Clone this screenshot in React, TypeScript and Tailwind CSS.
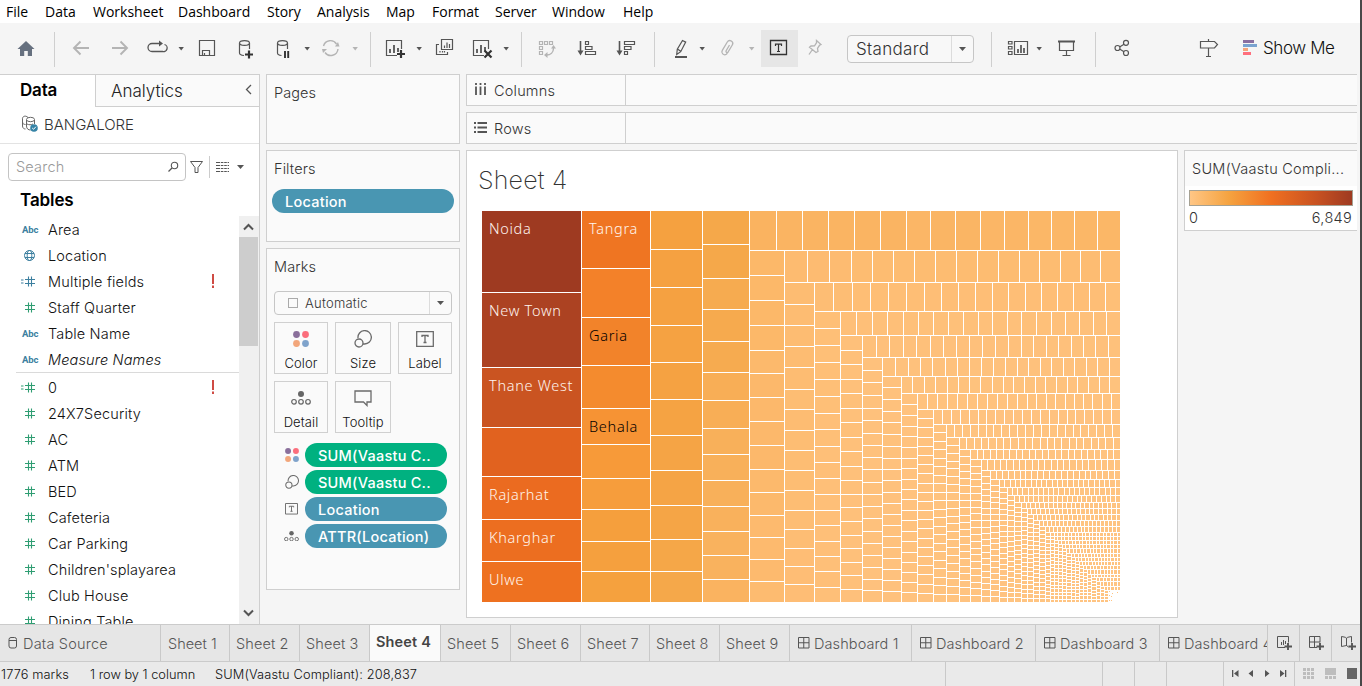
import React from "react";

const UI = "font-['Inter','Liberation_Sans',sans-serif] font-light";
const INK = "#555";
const DIM = "#b4b4b4";

/* ---------- toolbar ---------- */

function Tool({ x, w, className = "", children }: { x: number; w: number; className?: string; children?: React.ReactNode }) {
  return (
    <svg width={w} height={51} viewBox={`${x} 23 ${w} 51`} fill="none" stroke={INK} strokeWidth={1.2} className={`block shrink-0 ${className}`}>
      {children}
    </svg>
  );
}
const Caret = ({ x, c = INK, y = 47 }: { x: number; c?: string; y?: number }) => <path d={`M${x} ${y}h5.4l-2.7 3.6z`} fill={c} stroke="none" />;
const Sep = ({ x }: { x: number }) => <path d={`M${x + 0.5} 32v35`} stroke="#cfcfcf" strokeWidth={1} />;

function Toolbar() {
  return (
    <div className="flex h-[51px] shrink-0 bg-[#f5f5f5]">
      <Tool x={0} w={60}>
        <path d="M26 41l-8.5 8H20v7h4.2v-5h3.6v5H32v-7h2.500z" fill="#66707f" stroke="none" />
        <Sep x={54} />
      </Tool>
      <Tool x={60} w={40}><path d="M89 48H74M80.500 41.500L74 48l6.500 6.500" stroke={DIM} strokeWidth={1.9} /></Tool>
      <Tool x={100} w={40}><path d="M112 48h15M120.500 41.500L127 48l-6.500 6.500" stroke={DIM} strokeWidth={1.9} /></Tool>
      <Tool x={140} w={50}>
        <path d="M160 43.500h-8a4 4 0 000 8h10.500a3.600 3.600 0 002-7" strokeWidth={1.3} />
        <path d="M159 40.500l4 3-4 3z" fill={INK} stroke="none" />
        <Caret x={178.500} />
      </Tool>
      <Tool x={190} w={37}><path d="M199.500 40.500h15v15h-15zM202.500 55v-4.500h7V55M204.500 55v-2" /></Tool>
      <Tool x={227} w={38}>
        <path d="M239.500 43v10c0 1.500 2 2.300 4.500 2.500M249.500 43v6" /><ellipse cx="244.500" cy="43" rx="5" ry="2.400" />
        <path d="M249 50.500v8M245 54.500h8" stroke="#333" strokeWidth={2.200} />
      </Tool>
      <Tool x={265} w={50}>
        <path d="M277.500 43v10c0 1.500 2 2.300 4 2.500M287.500 43v6" /><ellipse cx="282.500" cy="43" rx="5" ry="2.400" />
        <path d="M285 51v7M288.200 51v7" stroke="#333" strokeWidth={1.900} />
        <Caret x={304.500} />
      </Tool>
      <Tool x={315} w={50}>
        <path d="M323.500 46a7.200 7.200 0 0113-2M338 49a7.200 7.200 0 01-13 3.500" stroke={DIM} strokeWidth={1.400} />
        <path d="M335 46.500h4.500l-1.500-4.500zM322 49h5l-4 4z" fill={DIM} stroke="none" />
        <Caret x={352.500} c={DIM} />
      </Tool>
      <Tool x={365} w={13}><Sep x={370} /></Tool>
      <Tool x={378} w={50}>
        <path d="M397 55.500h-10.500v-15h15V49" /><path d="M390 53v-4M394 53v-8M398 52v-4" strokeWidth={1.800} />
        <path d="M401 50v8M397 54h8" stroke="#333" strokeWidth={2.200} />
        <Caret x={416.500} />
      </Tool>
      <Tool x={428} w={37}>
        <path d="M441.500 39.500h11v10h-11zM439 44.500h-2.500v10h11V52" /><path d="M444.500 48v-2.500M447 48v-5.500M449.500 48v-4M440 52.500V51M442.500 52.500V51M444.500 52.500V51" />
      </Tool>
      <Tool x={465} w={50}>
        <path d="M484 55.500h-10.500v-15h15V49" /><path d="M477 53v-4M481 53v-8M485 51v-4" strokeWidth={1.800} />
        <path d="M484.500 50.500l7 7M491.500 50.500l-7 7" stroke="#333" strokeWidth={2.200} />
        <Caret x={503.500} />
      </Tool>
      <Tool x={515} w={15}><Sep x={521} /></Tool>
      <Tool x={530} w={38}>
        <path d="M539.500 41.500h3v3h-3zM544.500 41.500h3v3h-3zM549.500 41.500h3v3h-3zM539.500 46.500h3v3h-3zM539.500 51.500h3v3h-3z" stroke={DIM} />
        <path d="M546.500 55c4 0 7-2.500 7-7" stroke={DIM} strokeWidth={1.400} /><path d="M551 48.500l2.500-3.500 2.500 3.500zM547.500 52l-3.500 3 3.500 3z" fill={DIM} stroke="none" />
      </Tool>
      <Tool x={568} w={38}>
        <path d="M580.500 41v11" strokeWidth={1.600} /><path d="M577.500 50.500h6l-3 5z" fill={INK} stroke="none" />
        <path d="M585.500 41.500h3v3h-3zM585.500 46.500h6.500v3h-6.500zM585.500 51.500h10v3h-10z" />
      </Tool>
      <Tool x={606} w={39}>
        <path d="M619.500 41v11" strokeWidth={1.600} /><path d="M616.500 50.500h6l-3 5z" fill={INK} stroke="none" />
        <path d="M624.500 41.500h10v3h-10zM624.500 46.500h6.500v3h-6.500zM624.500 51.500h3v3h-3z" />
      </Tool>
      <Tool x={645} w={20}><Sep x={654} /></Tool>
      <Tool x={665} w={47}>
        <path d="M682.500 40.500l3.200 1.600-5 9.600-4 2.800.6-5.200zM677.500 49l3.500 2.500" /><path d="M675 57h12" strokeWidth={2} />
        <Caret x={699.500} />
      </Tool>
      <Tool x={712} w={49}>
        <path d="M729.500 45l-3.500 6a1.200 1.200 0 002 1.200l4.300-7.200a2.900 2.900 0 00-5-3l-5 8.300a2.900 2.900 0 004 4l1-1" stroke={DIM} strokeWidth={1.300} />
        <Caret x={749} c={DIM} />
      </Tool>
      <Tool x={761} w={37}>
        <path d="M761 30h37v37h-37z" fill="#e6e6e6" stroke="none" />
        <path d="M770.500 40.500h16v14h-16z" stroke="#333" strokeWidth={1.300} />
        <path d="M775.500 46v-1.800h6V46M778.500 44v7.500M777 51.500h3" stroke="#333" strokeWidth={1.200} />
      </Tool>
      <Tool x={798} w={49}><path d="M816.500 40.500l4.500 4-1.500.8-2 3.200.5 3-2 1-6.500-5.200 1.500-1.300 3.500-.2 2-3zM812.500 49.500l-3.500 5" stroke={DIM} strokeWidth={1.300} /></Tool>
      <div className={`${UI} mt-3 flex h-7 w-[127px] shrink-0 items-center rounded-sm border border-[#c6c6c6] bg-[#f8f8f8] text-[17px] text-[#333]`}>
        <span className="w-[103px] pl-2 pt-[2px] tracking-[0.3px]">Standard</span>
        <span className="flex h-full flex-1 items-center justify-center border-l border-[#dcdcdc]"><svg width="7" height="4"><path d="M0 0h7L3.500 4z" fill={INK} /></svg></span>
      </div>
      <Tool x={974} w={26}><Sep x={991} /></Tool>
      <Tool x={1000} w={48}>
        <path d="M1014.500 41.500h13v13h-13zM1008.500 41.500h3.500v2.500h-3.500zM1008.500 46.500h3.500v2.500h-3.500zM1008.500 51.500h3.500v3h-3.500z" />
        <path d="M1018 53v-4M1021 53v-8M1024 53v-5" strokeWidth={1.700} />
        <Caret x={1036.500} />
      </Tool>
      <Tool x={1048} w={37}><path d="M1058 41.500h17" strokeWidth={2} /><path d="M1059.500 42v8.500h14V42M1066.500 50.500V55M1062.500 55.500h8" /></Tool>
      <Tool x={1085} w={20}><Sep x={1095} /></Tool>
      <Tool x={1105} w={45}><circle cx="1117.500" cy="48" r="2.500" /><circle cx="1126" cy="42.800" r="2.500" /><circle cx="1126" cy="53" r="2.500" /><path d="M1120 46.700l4-2.500M1120 49.300l4 2.500" /></Tool>
      <Tool x={1190} w={40} className="ml-10"><path d="M1200.500 41.500h14l3 3-3 3.500h-14zM1208.500 39v2.500M1208.500 48v8M1206 56.500h5" /></Tool>
      <div className="ml-3 flex items-center">
        <svg width="15" height="16" viewBox="0 0 15 16" className="mb-[2px]">
          <path d="M1 0h11v3H1z" fill="#8a6fa0" /><path d="M1 4h14v3H1z" fill="#7aa3d0" /><path d="M1 8h5v3H1z" fill="#f4a57a" /><path d="M1 12h8v3H1z" fill="#ff6f7d" />
        </svg>
        <span className={`${UI} ml-[6px] text-[17px] tracking-[-0.4px] text-[#111]`}>Show Me</span>
      </div>
    </div>
  );
}

/* ---------- data pane ---------- */

type Kind = "abc" | "geo" | "calcDim" | "num" | "calcNum";

function FieldIcon({ kind }: { kind: Kind }) {
  const blue = "#3c7f9f", green = "#2f9d72";
  if (kind === "abc") return <span className="w-7 pl-[2px] pt-[2px] font-['Roboto',sans-serif] text-[9.500px] font-bold tracking-[-0.1px] text-[#3c7f9f]">Abc</span>;
  if (kind === "geo")
    return (
      <svg width="28" height="14" viewBox="0 0 28 14" fill="none" stroke={blue} strokeWidth="1">
        <circle cx="9.500" cy="7.500" r="5" /><ellipse cx="9.500" cy="7.500" rx="2.300" ry="5" /><path d="M5 5.500h9M5 9.500h9" />
      </svg>
    );
  const calc = kind !== "num";
  return (
    <svg width="28" height="14" viewBox="0 0 28 14" fill="none" stroke={kind === "calcDim" ? blue : green} strokeWidth="1.100">
      <path d="M5 5.500h10M5 9.500h10M8.500 2.500v10M11.500 2.500v10" />
      {calc && <path d="M1 6h2.500M1 9h2.500" />}
    </svg>
  );
}

const dims: [Kind, string, boolean?][] = [
  ["abc", "Area"], ["geo", "Location"], ["calcDim", "Multiple fields", true], ["num", "Staff Quarter"], ["abc", "Table Name"], ["abc", "Measure Names"],
];
const measures: [Kind, string, boolean?][] = [
  ["calcNum", "0", true], ["num", "24X7Security"], ["num", "AC"], ["num", "ATM"], ["num", "BED"], ["num", "Cafeteria"], ["num", "Car Parking"],
  ["num", "Children'splayarea"], ["num", "Club House"], ["num", "Dining Table"],
];

function Field({ f }: { f: [Kind, string, boolean?] }) {
  return (
    <div className="flex h-[26px] items-center pl-5">
      <FieldIcon kind={f[0]} />
      <span className={`flex-1 pt-[2px] text-[14.500px] tracking-[0.15px] text-[#111] ${f[1] === "Measure Names" ? "italic" : ""}`}>{f[1]}</span>
      {f[2] && <svg width="28" height="14"><path d="M2 0v10M2 11.500v2.500" stroke="#cf4b44" strokeWidth="2" /></svg>}
    </div>
  );
}

function DataPane() {
  return (
    <div className={`${UI} flex w-[260px] shrink-0 flex-col border-r border-t border-[#cfcfcf] bg-white`}>
      <div className="flex h-8 shrink-0">
        <div className="w-[95px] pl-5 pt-[3px] text-[17px] font-semibold leading-6 tracking-[-0.2px] text-black">Data</div>
        <div className="flex flex-1 justify-between border-b border-l border-[#cfcfcf] bg-[#fafafa] pl-[15px] pr-[7px] pt-1 text-[17px] leading-6 text-[#222]">
          Analytics
          <svg width="7" height="12" className="mt-[5px]"><path d="M6 1L1.500 5.500 6 10" fill="none" stroke={INK} strokeWidth="1.300" /></svg>
        </div>
      </div>
      <div className="flex h-[37px] shrink-0 items-center border-b border-[#e3e3e3] pl-5 text-[15px] text-[#333]">
        <svg width="18" height="18" viewBox="0 0 18 18" fill="none" stroke="#666" className="mb-[2px]">
          <path d="M8 2.500C5-.5 2 2 2.500 4v7c0 2 1.500 3 3 3M2.500 7c0 2 2 2.500 3 2.500M6.500 5v6c0 3 2 4 4 4" /><ellipse cx="10.500" cy="4.500" rx="4" ry="2.200" /><path d="M14.500 5v4M7 9c2 1 4 1 6 0" />
          <circle cx="14" cy="13" r="3.800" fill="#3583a6" stroke="none" /><path d="M12.200 13l1.400 1.300 2.300-2.600" stroke="#fff" />
        </svg>
        <span className="ml-[6px] pt-[1px]">BANGALORE</span>
      </div>
      <div className="flex h-[45px] shrink-0 items-center pl-2">
        <div className="flex h-7 w-[178px] items-center justify-between rounded-sm border border-[#c4c4c4] pl-[7px] pr-[6px] text-[14.500px] tracking-[0.2px] text-[#999]">
          Search
          <svg width="11" height="11" fill="none" stroke="#555"><circle cx="6.500" cy="4.500" r="3.200" strokeWidth="1.100" /><path d="M4 7l-3.500 3.500" strokeWidth="1.300" /></svg>
        </div>
        <svg width="68" height="28" viewBox="186 153 68 28" fill="none" stroke="#555">
          <path d="M190.500 161.500h12l-4.500 6v5h-3v-5z" /><path d="M209.500 156v22" stroke="#ccc" />
          <path d="M216 162.500h13M216 165.500h13M216 168.500h13M216 171.500h13" strokeWidth="1.200" strokeDasharray="4 .8 2.600 .8 2.600 .8 2" />
          <path d="M237 165h7l-3.500 4z" fill={INK} stroke="none" />
        </svg>
      </div>
      <div className="flex h-[27px] shrink-0 items-start pl-5 text-[17px] font-semibold leading-[22px] tracking-[-0.1px] text-black">Tables</div>
      <div className="flex min-h-0 flex-1">
        <div className="w-[239px] overflow-hidden">
          {dims.map((f) => <Field key={f[1]} f={f} />)}
          <div className="ml-4 border-t border-[#dadada] pb-[1px]" />
          {measures.map((f) => <Field key={f[1]} f={f} />)}
        </div>
        <div className="flex flex-1 flex-col items-center bg-[#f0f0f0]">
          <svg width="20" height="21"><path d="M5 13.500L9.500 9l4.500 4.500" fill="none" stroke={INK} strokeWidth="2" /></svg>
          <div className="mr-[1px] h-[109px] w-[19px] bg-[#cdcdcd]" />
          <svg width="20" height="21" className="mt-auto"><path d="M5 7.500L9.500 12 14 7.500" fill="none" stroke={INK} strokeWidth="2" /></svg>
        </div>
      </div>
    </div>
  );
}

/* ---------- shelves and marks ---------- */

const Dots = ({ s }: { s: number }) => (
  <svg width={s} height={s} viewBox="0 0 16 16">
    <circle cx="3.500" cy="3.500" r="3.400" fill="#8a6f9b" /><circle cx="12.500" cy="3.500" r="3.400" fill="#fb6e7c" /><circle cx="3.500" cy="12.500" r="3.400" fill="#f2a67b" /><circle cx="12.500" cy="12.500" r="3.400" fill="#7fa3cb" />
  </svg>
);
const SizeIcon = ({ s }: { s: number }) => (
  <svg width={s} height={s} viewBox="0 0 18 18" fill="none" stroke="#6b6b6b" strokeWidth="1.300"><path d="M4 8a6.700 6.700 0 116.500 6H9" /><circle cx="5" cy="13" r="4" /></svg>
);
const LabelIcon = ({ w }: { w: number }) => (
  <svg width={w} height={w * 0.89} viewBox="0 0 18 16" fill="none" stroke="#6b6b6b" strokeWidth="1.300"><path d="M.7.7h16.600v14.600H.7zM6 6V4.500h6V6M9 4.500v7M7.500 11.500h3" /></svg>
);
const DetailIcon = ({ w }: { w: number }) => (
  <svg width={w} height={w * 0.7} viewBox="0 0 20 14" fill="none" stroke="#666" strokeWidth="1.200"><circle cx="10" cy="3" r="3" fill="#666" stroke="none" /><circle cx="3" cy="10.800" r="2.300" /><circle cx="10" cy="10.800" r="2.300" /><circle cx="17" cy="10.800" r="2.300" /></svg>
);
const TooltipIcon = () => (
  <svg width="18" height="17" viewBox="0 0 18 17" fill="none" stroke="#6b6b6b" strokeWidth="1.300"><path d="M1 1h16v11h-4v3.500L9.500 12H1z" /></svg>
);

function MarkButton({ icon, label, wide }: { icon: React.ReactNode; label: string; wide?: boolean }) {
  return (
    <div className={`flex h-[52px] flex-col items-center justify-between border border-[#d0d0d0] pb-[1px] pt-[7px] text-[13px] text-[#111] ${wide ? "w-14" : "w-[54px]"}`}>
      <div className="flex h-[18px] items-center">{icon}</div>
      <span className="leading-[18px]">{label}</span>
    </div>
  );
}

function Pill({ icon, label, green }: { icon: React.ReactNode; label: string; green?: boolean }) {
  return (
    <div className="flex items-center">
      <div className="flex w-[38px] justify-center pl-[11px]">{icon}</div>
      <div className={`flex h-6 w-[142px] items-center rounded-full pl-[13px] pt-[2px] text-[14.500px] font-medium tracking-[0.25px] text-white ${green ? "bg-[#00b180]" : "bg-[#4996b2]"}`}>{label}</div>
    </div>
  );
}

const card = "shrink-0 border border-[#cfcfcf] bg-[#fafafa]";

function Cards() {
  return (
    <div className={`${UI} ml-[6px] flex w-[194px] shrink-0 flex-col gap-[6px] text-[14.500px] tracking-[0.1px] text-[#333]`}>
      <div className={`${card} h-[70px] pl-[7px] pt-[7px]`}>Pages</div>
      <div className={`${card} h-[92px] px-[5px] pt-[7px]`}>
        <div className="pl-[2px] leading-[22px]">Filters</div>
        <div className="mt-[9px] flex h-6 items-center rounded-full bg-[#4996b2] pl-[13px] pt-[2px] text-[14.500px] font-medium tracking-[0.25px] text-white">Location</div>
      </div>
      <div className={`${card} h-[342px] px-[7px] pt-[7px]`}>
        <div className="leading-[22px]">Marks</div>
        <div className="mt-[13px] flex h-6 w-[178px] items-center rounded-sm border border-[#c6c6c6] text-[13px] tracking-[0.25px]">
          <span className="ml-[13px] h-[10px] w-[10px] border border-[#aaa]" />
          <span className="ml-[7px] flex-1 pt-[2px]">Automatic</span>
          <span className="flex h-full w-[22px] items-center justify-center border-l border-[#dcdcdc]"><svg width="7" height="4"><path d="M0 0h7L3.500 4z" fill={INK} /></svg></span>
        </div>
        <div className="mt-[7px] flex w-[178px] flex-wrap gap-[7px]">
          <MarkButton icon={<Dots s={16} />} label="Color" />
          <MarkButton icon={<SizeIcon s={18} />} label="Size" wide />
          <MarkButton icon={<LabelIcon w={18} />} label="Label" />
          <MarkButton icon={<DetailIcon w={20} />} label="Detail" />
          <MarkButton icon={<TooltipIcon />} label="Tooltip" wide />
        </div>
        <div className="-ml-[7px] mt-[10px] flex flex-col gap-[3px]">
          <Pill icon={<Dots s={14} />} label="SUM(Vaastu C.." green />
          <Pill icon={<SizeIcon s={14} />} label="SUM(Vaastu C.." green />
          <Pill icon={<LabelIcon w={13} />} label="Location" />
          <Pill icon={<DetailIcon w={15} />} label="ATTR(Location)" />
        </div>
      </div>
    </div>
  );
}

function Shelf({ label, rows }: { label: string; rows?: boolean }) {
  return (
    <div className="flex h-8 shrink-0 border-y border-l border-[#cfcfcf] bg-[#fafafa]">
      <div className="flex w-[159px] items-center border-r border-[#cfcfcf] pl-[7px] text-[14.500px] tracking-[0.2px] text-[#333]">
        <svg width="13" height="13" viewBox="0 0 13 13" fill="none" stroke={INK} strokeWidth="1.800" className="mb-[2px]">
          {rows ? <path d="M0 2h2M3.500 2H13M0 6.500h2M3.500 6.500H13M0 11h2M3.500 11H13" /> : <path d="M2 0v2M2 3.500V12M6.500 0v2M6.500 3.500V12M11 0v2M11 3.500V12" />}
        </svg>
        <span className="ml-[7px] pt-[2px]">{label}</span>
      </div>
    </div>
  );
}

/* ---------- treemap ---------- */

type Cell = { x: number; y: number; w: number; h: number; c: string };
const R = 1120, B = 602;

/* Dividers of each strip: vertical strips list y values, horizontal strips list x values. */
const strips: { end: number; cuts: number[]; horiz?: boolean }[] = [
  { end: 581, cuts: [292, 367, 427, 476, 519, 561] },
  { end: 650, cuts: [268, 317, 365, 408, 444, 478, 509, 541, 571] },
  { end: 702, cuts: [249, 287, 325, 362, 399, 435, 470, 505, 539, 571] },
  { end: 749, cuts: [244, 278, 309, 341, 372, 400, 428, 454, 480, 506, 531, 555, 579] },
  { end: 250, horiz: true, cuts: [776, 802, 828, 854, 880, 906, 930, 955, 980, 1004, 1028, 1051, 1074, 1097] },
  { end: 784, cuts: [275, 300, 325, 350, 373, 397, 421, 445, 469, 492, 515, 537, 559, 581] },
  { end: 282, horiz: true, cuts: [807, 829, 851, 872, 893, 914, 935, 956, 977, 998, 1019, 1039, 1060, 1080, 1100] },
  { end: 814, cuts: [304, 325, 346, 367, 389, 409, 430, 450, 470, 490, 510, 529, 548, 566, 584] },
  { end: 311, horiz: true, cuts: [833, 852, 870, 888, 906, 924, 941, 958, 975, 992, 1008, 1025, 1041, 1057, 1073, 1089, 1105] },
  { end: 840, cuts: [328, 345, 362, 379, 396, 413, 429, 446, 462, 478, 494, 510, 525, 541, 556, 571, 587] },
  { end: 335, horiz: true, cuts: [856, 872, 887, 903, 918, 933, 948, 963, 978, 992, 1007, 1021, 1036, 1051, 1065, 1079, 1093, 1106] },
  { end: 862, cuts: [350, 364, 379, 393, 408, 422, 437, 451, 466, 480, 494, 507, 521, 535, 548, 562, 575, 589] },
  { end: 357, horiz: true, cuts: [876, 889, 903, 916, 930, 943, 956, 969, 982, 995, 1008, 1021, 1033, 1046, 1058, 1071, 1083, 1095, 1108] },
  { end: 882, cuts: [370, 382, 395, 408, 420, 433, 445, 457, 469, 482, 494, 506, 518, 531, 543, 555, 567, 579, 590] },
  { end: 376, horiz: true, cuts: [895, 908, 920, 932, 945, 957, 969, 981, 993, 1005, 1017, 1028, 1040, 1051, 1063, 1074, 1086, 1097, 1109] },
  { end: 901, cuts: [387, 399, 411, 422, 434, 446, 458, 469, 480, 492, 503, 514, 525, 536, 547, 558, 569, 580, 591] },
  { end: 393, horiz: true, cuts: [912, 924, 935, 947, 958, 969, 980, 992, 1003, 1013, 1024, 1035, 1045, 1056, 1067, 1077, 1088, 1099, 1109] },
  { end: 917, cuts: [404, 415, 426, 436, 447, 458, 468, 479, 489, 499, 510, 520, 531, 541, 552, 562, 572, 582, 592] },
  { end: 409, horiz: true, cuts: [927, 937, 947, 957, 967, 977, 987, 997, 1007, 1017, 1027, 1036, 1046, 1055, 1065, 1074, 1083, 1092, 1102, 1111] },
];

/* Long tail: [strip end, average pitch], alternating vertical and horizontal. */
const tail: [number, number][] = [
  [933, 9.2], [424, 8.7], [946, 8.5], [437, 8], [959, 7.9], [449, 7.2], [970, 7.3], [459, 6.6], [981, 6.8], [470, 6.300], [990, 6.200], [479, 5.800],
  [999, 5.800], [487, 5.300], [1007, 5.500], [495, 5.100], [1014, 5.100], [502, 4.700], [1021, 4.800], [508, 4.500], [1027, 4.500], [514, 4.300],
  [1033, 4.300], [520, 4.200], [1039, 4.100], [526, 4.100], [1045, 4], [532, 3.900], [1050, 3.600], [536, 3.500], [1054, 3.400], [540, 3.400], [1058, 3.400], [544, 3.300],
  [1062, 3.300], [548, 3.300], [1066, 3.300], [553, 3.300], [1071, 3.200], [557, 3.200], [1075, 3.200], [561, 3.200], [1079, 3.200], [565, 3.200],
  [1083, 3.200], [569, 3.200], [1087, 3.200], [574, 3.200], [1091, 3.200], [577, 3.200], [1096, 3.200], [581, 3.200], [1100, 3.200], [586, 3.200], [1104, 3.100], [590, 3.100], [1108, 3],
];

const stops: [number, number[]][] = [
  [0, [255, 196, 130]], [0.1, [253, 187, 112]], [0.22, [245, 168, 74]], [0.3, [245, 158, 60]], [0.4, [246, 142, 48]], [0.52, [238, 112, 32]], [0.62, [226, 98, 30]], [0.78, [200, 82, 33]], [1, [158, 58, 34]],
];
function shade(t: number) {
  const i = Math.max(1, stops.findIndex(([s]) => s >= t));
  const [a, ca] = stops[i - 1], [b, cb] = stops[i];
  const k = Math.min(1, (t - a) / (b - a));
  return `rgb(${ca.map((v, j) => Math.round(v + (cb[j] - v) * k)).join(",")})`;
}
const heads = [
  ["#9e3a21", "#ac4222", "#ca5421", "#e1621f", "#eb6b20", "#ec6e20", "#ee7120"],
  ["#ef7522", "#f38129", "#f2832a", "#f48b2e", "#f69334", "#f79a39", "#f69d3c", "#f59f3d", "#f5a03e", "#f5a13e"],
];

function buildCells(): Cell[] {
  const out: Cell[] = [];
  let x = 482, y = 211;
  const all = [
    ...strips,
    ...tail.map(([end, pitch], i) => {
      const horiz = i % 2 === 1;
      return { end, horiz, cuts: [] as number[], pitch };
    }),
  ];
  all.forEach((s: { end: number; horiz?: boolean; cuts: number[]; pitch?: number }, i) => {
    const start = s.horiz ? x : y, limit = s.horiz ? R : B;
    let cuts = s.cuts;
    if (s.pitch) {
      const n = Math.round((limit - start) / s.pitch);
      cuts = Array.from({ length: n - 1 }, (_, k) => Math.round(start + ((k + 1) * (limit + 1 - start)) / n) - 1);
    }
    const edges = [start - 1, ...cuts, limit];
    for (let k = 0; k + 1 < edges.length; k++) {
      const a = edges[k] + 1, len = edges[k + 1] - a;
      const w = s.horiz ? len : s.end - x, h = s.horiz ? s.end - y : len;
      const c = heads[i]?.[k] ?? shade(Math.min(0.28, (w + 1) * (h + 1) * 0.000138));
      out.push({ x: s.horiz ? a : x, y: s.horiz ? y : a, w, h, c });
    }
    if (s.horiz) y = s.end + 1;
    else x = s.end + 1;
  });
  [[1109, 591], [1109, 595], [1112, 593], [1117, 592], [1111, 596], [1111, 600], [1109, 600]].forEach(([cx, cy]) => out.push({ x: cx, y: cy, w: 1, h: 1, c: "#ffc482" }));
  return out;
}
const cells = buildCells();
const labels: [string, number, number, string][] = [
  ["Noida", 489, 234, "#fff4ee"], ["New Town", 489, 316, "#fff4ee"], ["Thane West", 489, 391, "#fff4ee"], ["Rajarhat", 489, 500, "#fff6ee"], ["Kharghar", 489, 543, "#fff6ee"],
  ["Ulwe", 489, 585, "#fff6ee"], ["Tangra", 589, 234, "#fff6ee"], ["Garia", 589, 341, "#000"], ["Behala", 589, 432, "#000"],
];

function Treemap() {
  return (
    <svg width="638" height="391" viewBox="482 211 638 391" className="block">
      {cells.map((c, i) => <rect key={i} x={c.x} y={c.y} width={c.w} height={c.h} fill={c.c} />)}
      {labels.map(([t, x, y, c]) => (
        <text key={t} x={x} y={y} fill={c} className="font-['Noto_Sans','Open_Sans',sans-serif] text-[14.500px] font-light tracking-[0.7px]">{t}</text>
      ))}
    </svg>
  );
}

function Canvas() {
  return (
    <div className={`${UI} ml-[6px] flex min-w-0 flex-1 flex-col gap-[6px]`}>
      <Shelf label="Columns" />
      <Shelf label="Rows" rows />
      <div className="flex gap-[6px]">
        <div className="h-[468px] w-[712px] shrink-0 border border-[#cfcfcf] bg-white pl-[15px] pt-[13px]">
          <div className="-ml-[4px] h-[47px] text-[25px] font-[200] leading-[32px] tracking-[0.2px] text-[#333]">Sheet 4</div>
          <Treemap />
        </div>
        <div className="flex h-[81px] min-w-0 flex-1 flex-col border-y border-l border-[#cfcfcf] bg-white text-[14.500px] text-[#333]">
          <div className="h-[35px] whitespace-nowrap bg-[#fafafa] pl-[7px] pt-[7px] tracking-[0.27px]">SUM(Vaastu Compli...</div>
          <div className="ml-1 mr-1 mt-1 h-4 shrink-0 border border-[#a5a193] bg-[linear-gradient(90deg,#ffc685_0%,#f5a340_24%,#f07020_50%,#c85221_78%,#9e3a21_100%)]" />
          <div className="flex justify-between pl-1 pr-[5px] leading-[24px]"><span>0</span><span className="tracking-[0.3px]">6,849</span></div>
        </div>
      </div>
    </div>
  );
}

/* ---------- tabs and status ---------- */

const tabs: [string, string][] = [
  ["Sheet 1", "w-[69px]"], ["Sheet 2", "w-[70px]"], ["Sheet 3", "w-[70px]"], ["Sheet 4", "w-[71px]"], ["Sheet 5", "w-[70px]"], ["Sheet 6", "w-[70px]"], ["Sheet 7", "w-[69px]"],
  ["Sheet 8", "w-[70px]"], ["Sheet 9", "w-[70px]"], ["Dashboard 1", "w-[122px]"], ["Dashboard 2", "w-[124px]"], ["Dashboard 3", "w-[124px]"], ["Dashboard 4", "w-[108px]"],
];
const GridIcon = () => (
  <svg width="12" height="12" fill="none" stroke={INK} className="mb-[2px] mr-[4px] shrink-0"><path d="M.5.5h10.500v10.500H.5zM5.750 0v11M0 5.750h11" /></svg>
);

function Tabs() {
  const cell = "flex shrink-0 items-center border-r border-[#c9c9c9] pt-[1px]";
  return (
    <div className={`${UI} flex h-[38px] shrink-0 overflow-hidden border-y border-[#cbcbcb] bg-[#e6e6e6] text-[14.500px] text-[#555]`}>
      <div className={`${cell} w-[161px] pl-2 tracking-[0.2px]`}>
        <svg width="10" height="12" fill="none" stroke={INK} className="mb-[2px] mr-[5px]"><rect x="1" y=".5" width="7.500" height="10.500" rx="2" /><path d="M1 3.500h7.500" /></svg>
        Data Source
      </div>
      {tabs.map(([t, w]) =>
        t === "Sheet 4" ? (
          <div key={t} className={`${cell} ${w} bg-[#fafafa] pb-[3px] pl-[6px] font-semibold tracking-[0.15px] text-[#444]`}>{t}</div>
        ) : (
          <div key={t} className={`${cell} ${w} overflow-hidden whitespace-nowrap ${t[0] === "D" ? "pl-2 tracking-[0.1px]" : t === "Sheet 1" ? "pl-[7px]" : "pl-[6px] tracking-[0.1px]"}`}>
            {t[0] === "D" && <GridIcon />}
            {t}
          </div>
        )
      )}
      <svg width="92" height="36" viewBox="1268 625 92 36" fill="none" stroke={INK}>
        <path d="M1285 647.500h-7.500v-11h11v6M1281.500 645v-3M1283.500 645v-5M1285.500 644v-3" /><path d="M1288 643v7M1284.500 646.500h7.500" strokeWidth="1.900" />
        <path d="M1317 647.500h-7.500v-11h10.500v6M1309 642h11M1314.500 637v10.500" /><path d="M1320 643v7M1316.500 646.500h7.500" strokeWidth="1.900" />
        <path d="M1348.500 647l-2-1.500-5 1v-10l4 .8 1 1 1-1 4-.8v6M1346.500 638v8" /><path d="M1352 643v7M1348.500 646.500h7.500" strokeWidth="1.900" />
        <path d="M1299.500 625v36M1331.500 625v36" stroke="#c9c9c9" />
      </svg>
    </div>
  );
}

function Status() {
  return (
    <div className={`${UI} flex h-6 shrink-0 bg-[#eaeaea] text-[12.800px] leading-[25px] text-[#111]`}>
      <span className="w-[90px] pl-[1px] tracking-[0.1px]">1776 marks</span>
      <span className="w-[125px]">1 row by 1 column</span>
      <span className="flex-1 tracking-[0.13px]">SUM(Vaastu Compliant): 208,837</span>
      <svg width="415" height="24" viewBox="945 662 415 24" className="shrink-0">
        <path d="M945.500 662v24M1102.500 662v24M1134.500 662v24M1166.500 662v24M1223.500 662v24M1294.500 662v24" stroke="#c9c9c9" />
        <path d="M1232 670h1.300v7H1232zM1238.500 670v7l-4.500-3.500zM1253 670v7l-4.500-3.500zM1265 670v7l4.500-3.500zM1280 670v7l4.500-3.500zM1285 670h1.300v7H1285z" fill={INK} />
        <path d="M1303 668h3v3h-3zM1307 668h3v3h-3zM1311 668h3v3h-3zM1303 672h3v3h-3zM1307 672h3v3h-3zM1311 672h3v3h-3zM1303 676h3v3h-3zM1307 676h3v3h-3zM1311 676h3v3h-3zM1325 668h11v7h-11zM1325 676h3v3h-3zM1329 676h3v3h-3zM1333 676h3v3h-3z" fill="#bdbdbd" />
        <path d="M1347 668h10v11h-10z" fill="#666" />
      </svg>
    </div>
  );
}

const menu: [string, string][] = [
  ["File", "w-[39px]"], ["Data", "w-[48px]"], ["Worksheet", "w-[85px]"], ["Dashboard", "w-[89px]"], ["Story", "w-[50px]"], ["Analysis", "w-[69px]"],
  ["Map", "w-[46px]"], ["Format", "w-[63px]"], ["Server", "w-[57px]"], ["Window", "w-[71px]"], ["Help", "w-[40px]"],
];

export default function App() {
  return (
    <div className="flex h-[686px] w-[1362px] overflow-hidden bg-[#f5f5f5]">
      <div className="flex w-[1360px] shrink-0 flex-col">
        <div className="flex h-[23px] shrink-0 bg-white pl-[6px] font-['Open_Sans',sans-serif] text-[14px] leading-[23px] text-black">
          {menu.map(([m, w]) => <span key={m} className={`${w} shrink-0`}>{m}</span>)}
        </div>
        <Toolbar />
        <div className="flex h-[550px] shrink-0 pr-[3px]">
          <DataPane />
          <Cards />
          <Canvas />
        </div>
        <Tabs />
        <Status />
      </div>
      <div className="w-[2px] bg-[#484848]" />
    </div>
  );
}
